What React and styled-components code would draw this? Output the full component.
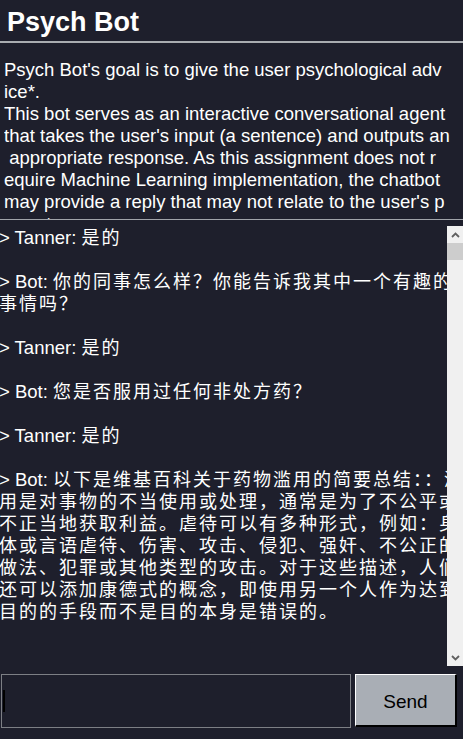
import styled, { createGlobalStyle } from 'styled-components';

const GlobalStyle = createGlobalStyle`
  html, body {
    margin: 0;
    padding: 0;
    background: #1e1f2c;
    overflow: hidden;
  }
`;

const intro = [
  "Psych Bot's goal is to give the user psychological adv",
  'ice*.',
  'This bot serves as an interactive conversational agent',
  "that takes the user's input (a sentence) and outputs an",
  ' appropriate response. As this assignment does not r',
  'equire Machine Learning implementation, the chatbot',
  "may provide a reply that may not relate to the user's p",
  'rompt',
];

// each row is [speaker prefix, chinese text]
const log = [
  ['> Tanner: ', '是的'],
  ['', ''],
  ['> Bot: ', '你的同事怎么样？你能告诉我其中一个有趣的'],
  ['', '事情吗？'],
  ['', ''],
  ['> Tanner: ', '是的'],
  ['', ''],
  ['> Bot: ', '您是否服用过任何非处方药？'],
  ['', ''],
  ['> Tanner: ', '是的'],
  ['', ''],
  ['> Bot: ', '以下是维基百科关于药物滥用的简要总结：：滥'],
  ['', '用是对事物的不当使用或处理，通常是为了不公平或'],
  ['', '不正当地获取利益。虐待可以有多种形式，例如：身'],
  ['', '体或言语虐待、伤害、攻击、侵犯、强奸、不公正的'],
  ['', '做法、犯罪或其他类型的攻击。对于这些描述，人们'],
  ['', '还可以添加康德式的概念，即使用另一个人作为达到'],
  ['', '目的的手段而不是目的本身是错误的。'],
];

const Chevron = ({ down }) => (
  <svg width="9" height="6" viewBox="0 0 9 6">
    <path
      d={down ? 'M1 1 L4.5 4.5 L8 1' : 'M1 5 L4.5 1.5 L8 5'}
      fill="none"
      stroke="#606060"
      strokeWidth="1.8"
    />
  </svg>
);

const App = () => {
  return (
    <Window>
      <GlobalStyle />
      <Header>Psych Bot</Header>
      <Rule $size={2} $color="#a9acb1" />
      <Intro>
        {intro.map((line, i) => (
          <Line key={i}>{line}</Line>
        ))}
      </Intro>
      <Rule $size={1} $color="#a0a3a9" />
      <ChatPane>
        <ChatLog>
          {log.map(([who, text], i) => (
            <Line key={i}>
              {who}
              <Han>{text}</Han>
            </Line>
          ))}
        </ChatLog>
        <ScrollBar>
          <ArrowButton>
            <Chevron />
          </ArrowButton>
          <Track>
            <Thumb />
          </Track>
          <ArrowButton>
            <Chevron down />
          </ArrowButton>
        </ScrollBar>
      </ChatPane>
      <InputRow>
        <Entry>
          <Caret />
        </Entry>
        <SendButton>Send</SendButton>
      </InputRow>
    </Window>
  );
};

const Window = styled.div`
  height: 739px;
  width: 463px;
  display: flex;
  flex-direction: column;
  background: #1e1f2c;
  color: #ffffff;
  font-family: 'Liberation Sans', 'Noto Sans CJK SC', sans-serif;
  font-size: 18.5px;
`;
const Header = styled.div`
  height: 41px;
  box-sizing: border-box;
  display: flex;
  align-items: center;
  padding: 4px 0 0 7px;
  font-size: 27px;
  font-weight: bold;
`;
const Rule = styled.div`
  height: ${(p) => p.$size}px;
  background: ${(p) => p.$color};
  flex-shrink: 0;
`;
const Intro = styled.div`
  height: 176px;
  box-sizing: border-box;
  padding: 16px 0 0 4px;
  overflow: hidden;
  flex-shrink: 0;
`;
const Line = styled.div`
  height: 22px;
  line-height: 22px;
  white-space: pre;
  overflow: hidden;
`;
const Han = styled.span`
  font-family: 'Noto Sans CJK SC', sans-serif;
  font-size: 18px;
  letter-spacing: 2px;
`;
const ChatPane = styled.div`
  height: 446px;
  display: flex;
  flex-shrink: 0;
`;
const ChatLog = styled.div`
  flex: 1;
  overflow: hidden;
  padding-top: 5px;
  margin-left: -1px;
`;
const ScrollBar = styled.div`
  width: 16px;
  margin-top: 6px;
  background: #f0f0f0;
  display: flex;
  flex-direction: column;
`;
const ArrowButton = styled.div`
  height: 17px;
  display: flex;
  align-items: center;
  justify-content: center;
`;
const Track = styled.div`
  flex: 1;
`;
const Thumb = styled.div`
  height: 17px;
  background: #cdcdcd;
`;
const InputRow = styled.div`
  display: flex;
  gap: 4px;
  padding: 8px 0 0 1px;
`;
const Entry = styled.div`
  width: 350px;
  height: 54px;
  box-sizing: border-box;
  border: 1px solid #7d7f85;
  display: flex;
  align-items: center;
  padding-left: 1px;
`;
const Caret = styled.div`
  width: 2px;
  height: 22px;
  background: #000000;
`;
const SendButton = styled.div`
  width: 102px;
  height: 53px;
  box-sizing: border-box;
  padding-top: 3px;
  background: #a9aeb5;
  border-top: 1px solid #ffffff;
  border-left: 1px solid #ffffff;
  border-right: 2px solid #000000;
  border-bottom: 2px solid #000000;
  display: flex;
  align-items: center;
  justify-content: center;
  color: #000000;
  font-size: 19px;
`;

export default App;
